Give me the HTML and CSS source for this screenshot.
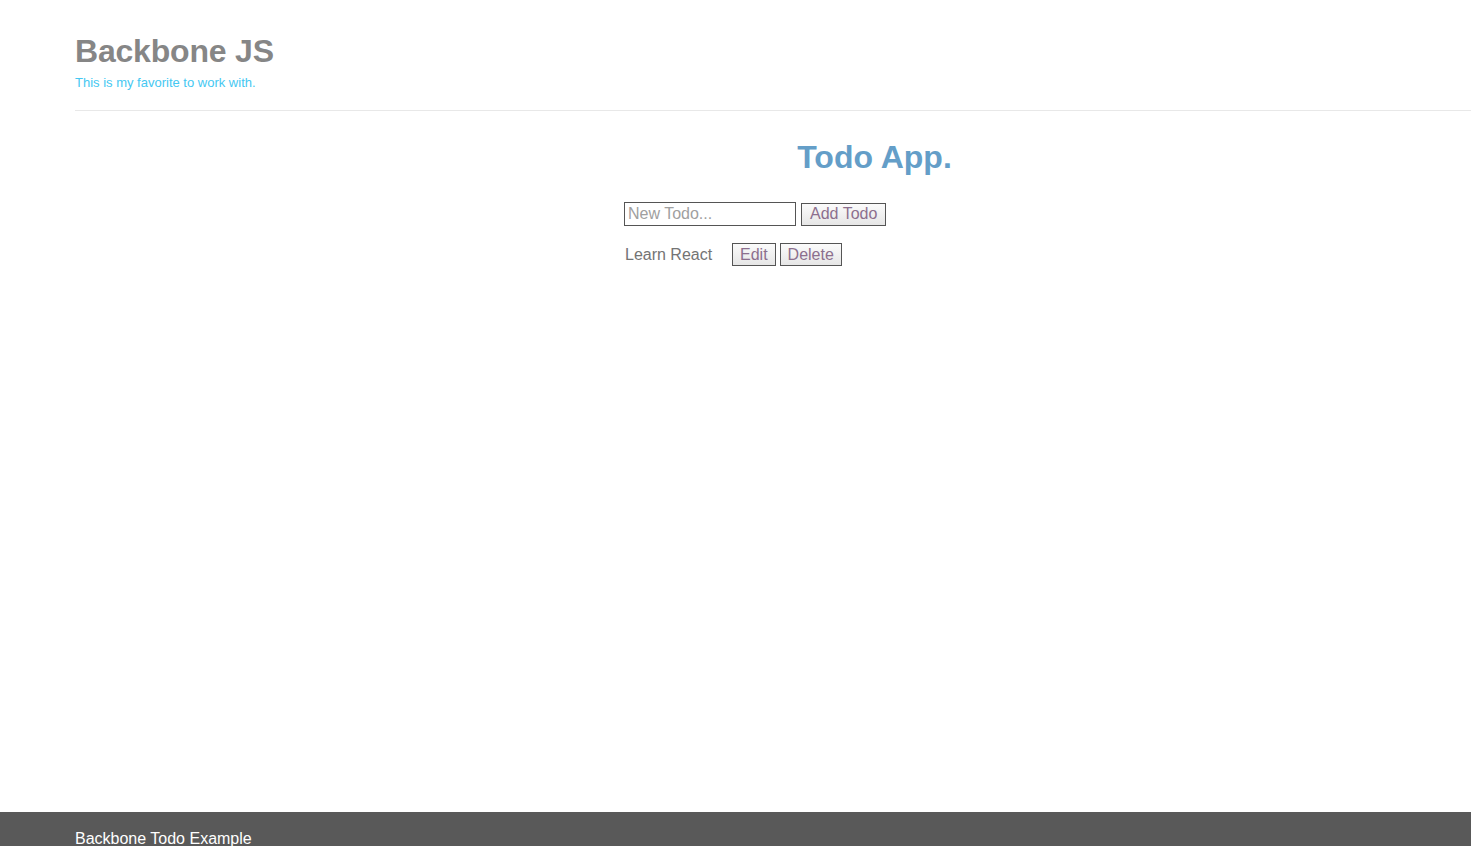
FILE: index.html
```html
<!DOCTYPE html>
<html lang="en">
<head>
<meta charset="utf-8">
<title>Backbone JS</title>
<link rel="stylesheet" href="styles.css">
</head>
<body>
<div class="page">
  <header class="site-header">
    <h1 class="brand">Backbone JS</h1>
    <p class="tagline">This is my favorite to work with.</p>
  </header>
  <main class="app">
    <h2 class="app-title">Todo App.</h2>
    <form class="todo-form">
      <input class="todo-input" type="text" placeholder="New Todo...">
      <button class="btn btn-add" type="button">Add Todo</button>
    </form>
    <ul class="todo-list">
      <li class="todo-item">
        <span class="todo-text">Learn React</span>
        <button class="btn" type="button">Edit</button>
        <button class="btn" type="button">Delete</button>
      </li>
    </ul>
  </main>
</div>
<footer class="site-footer">Backbone Todo Example</footer>
</body>
</html>
```
FILE: styles.css
```css
html, body {
  margin: 0;
  padding: 0;
  height: 100%;
  overflow: hidden;
}
body {
  font-family: "Liberation Sans", Arial, sans-serif;
  display: flex;
  flex-direction: column;
  background: #fff;
}
.page {
  flex: 1;
  padding-left: 75px;
}
.site-header {
  padding-top: 31px;
  padding-bottom: 19px;
  border-bottom: 1px solid #e8e8e8;
}
.brand {
  margin: 0;
  font-size: 32px;
  line-height: 40px;
  font-weight: bold;
  letter-spacing: -0.2px;
  color: #868686;
}
.tagline {
  margin: 4px 0 0 0;
  font-size: 13px;
  line-height: 16px;
  color: #45c8f2;
}
.app {
  margin-left: 549px;
  width: 501px;
}
.app-title {
  margin: 26px 0 0 0;
  text-align: center;
  font-size: 32px;
  line-height: 40px;
  font-weight: bold;
  color: #649ec8;
}
.todo-form {
  display: flex;
  align-items: center;
  gap: 5px;
  margin-top: 25px;
}
.todo-input {
  box-sizing: border-box;
  width: 172px;
  height: 24px;
  margin: 0;
  padding: 0 3px;
  border: 1px solid #555;
  font-family: inherit;
  font-size: 16px;
  color: #666;
  outline: none;
}
.todo-input::placeholder {
  color: #a0a0a0;
}
.btn {
  box-sizing: border-box;
  height: 23px;
  margin: 0;
  padding: 0 7px;
  border: 1px solid #555;
  border-radius: 0;
  background: linear-gradient(#fbfbfb, #e6e6e6);
  font-family: inherit;
  font-size: 16px;
  line-height: 20px;
  color: #8c6f8e;
}
.btn-add {
  padding: 0 8px;
}
.todo-list {
  list-style: none;
  margin: 17px 0 0 0;
  padding: 0;
}
.todo-item {
  display: flex;
  align-items: center;
  gap: 4px;
  padding-left: 1px;
}
.todo-text {
  width: 103px;
  font-size: 16px;
  color: #747474;
}
.site-footer {
  flex: none;
  height: 34px;
  box-sizing: border-box;
  overflow: hidden;
  padding: 18px 0 0 75px;
  background: #595959;
  color: #fff;
  font-size: 16px;
  line-height: 18px;
}
```
